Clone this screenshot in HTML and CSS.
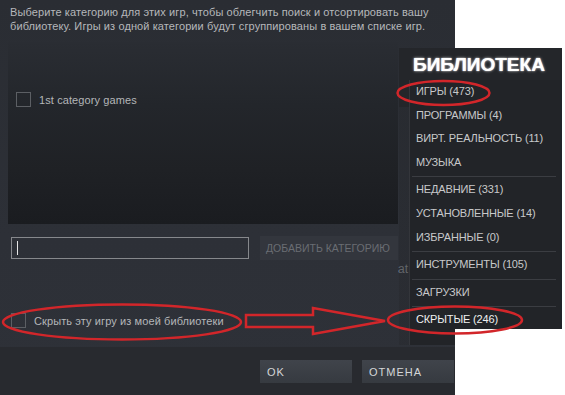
FILE: index.html
```html
<!DOCTYPE html>
<html lang="ru">
<head>
<meta charset="utf-8">
<title>Категории</title>
<link rel="stylesheet" href="styles.css">
</head>
<body>
<div class="page">
  <div class="dialog">
    <div class="main">
      <p class="intro">Выберите категорию для этих игр, чтобы облегчить поиск и отсортировать вашу<br>библиотеку. Игры из одной категории будут сгруппированы в вашем списке игр.</p>
      <div class="list">
        <label class="check-row">
          <span class="box"></span>
          <span class="check-label">1st category games</span>
        </label>
      </div>
      <div class="add-row">
        <div class="input"><span class="caret"></span></div>
        <div class="btn-add">ДОБАВИТЬ КАТЕГОРИЮ</div>
      </div>
      <div class="note">at</div>
      <label class="check-row hide-row">
        <span class="box"></span>
        <span class="check-label">Скрыть эту игру из моей библиотеки</span>
      </label>
    </div>
    <div class="footer">
      <div class="btn">OK</div>
      <div class="btn">ОТМЕНА</div>
    </div>
  </div>

  <div class="library">
    <div class="lib-title">БИБЛИОТЕКА</div>
    <ul class="lib-list">
      <li>ИГРЫ (473)</li>
      <li>ПРОГРАММЫ (4)</li>
      <li>ВИРТ. РЕАЛЬНОСТЬ (11)</li>
      <li>МУЗЫКА</li>
      <li class="sep"></li>
      <li>НЕДАВНИЕ (331)</li>
      <li>УСТАНОВЛЕННЫЕ (14)</li>
      <li>ИЗБРАННЫЕ (0)</li>
      <li class="sep"></li>
      <li>ИНСТРУМЕНТЫ (105)</li>
      <li class="sep"></li>
      <li>ЗАГРУЗКИ</li>
      <li class="sep"></li>
      <li class="active">СКРЫТЫЕ (246)</li>
    </ul>
  </div>

  <div class="blank"></div>

  <svg class="marks" width="565" height="395" viewBox="0 0 565 395" aria-hidden="true">
    <ellipse cx="122" cy="322" rx="119" ry="17.5"/>
    <ellipse cx="443.5" cy="93" rx="46" ry="12"/>
    <ellipse cx="455" cy="320" rx="67" ry="13.5"/>
    <polygon points="246,315 313,315 313,308 385,321 313,334 313,327 246,327"/>
  </svg>
</div>
</body>
</html>
```

FILE: styles.css
```css
* { box-sizing: border-box; }
html, body {
  margin: 0;
  padding: 0;
  background: #ffffff;
}
body {
  font-family: "Liberation Sans", Arial, sans-serif;
  width: 565px;
  height: 395px;
  overflow: hidden;
}
.page {
  position: relative;
  width: 565px;
  height: 395px;
}
.dialog {
  width: 455px;
  height: 395px;
  display: flex;
  flex-direction: column;
  background: linear-gradient(180deg, #2a2d33 0%, #2d3037 60%, #2e3138 100%);
}
.main {
  flex: 1;
  display: flex;
  flex-direction: column;
}
.intro {
  margin: 0;
  padding: 5px 10px 0 10px;
  font-size: 11px;
  letter-spacing: 0.1px;
  line-height: 14px;
  color: #b6b8bb;
  white-space: nowrap;
}
.list {
  margin: 9px 57px 0 8px;
  height: 182px;
  padding: 50px 0 0 8px;
  background: linear-gradient(180deg, #2a2d33 0%, #23262b 35%, #1f2125 70%, #1a1c20 100%);
}
.check-row {
  display: flex;
  align-items: center;
  gap: 8px;
}
.box {
  width: 15px;
  height: 15px;
  border: 1px solid #5c5f64;
  flex: none;
}
.check-label {
  font-size: 11px;
  letter-spacing: 0.1px;
  color: #b4b6b9;
}
.add-row {
  display: flex;
  align-items: center;
  gap: 11px;
  margin: 12px 0 0 11px;
}
.input {
  width: 238px;
  height: 22px;
  border: 1px solid #86888c;
  display: flex;
  align-items: center;
  padding-left: 5px;
}
.caret {
  width: 1px;
  height: 14px;
  background: #e6e6e6;
}
.btn-add {
  width: 138px;
  height: 24px;
  background: #33363d;
  color: #6a6d73;
  font-size: 10.5px;
  display: flex;
  align-items: center;
  padding-left: 6px;
  white-space: nowrap;
  overflow: hidden;
}
.note {
  margin: 2px 0 0 398px;
  font-size: 12px;
  line-height: 14px;
  color: #83868b;
}
.hide-row {
  margin: 37px 0 0 11px;
}
.footer {
  height: 48px;
  flex: none;
  background: #282a2f;
  display: flex;
  gap: 10px;
  padding: 13px 0 0 260px;
}
.btn {
  width: 92px;
  height: 23px;
  background: linear-gradient(180deg, #40444b 0%, #363a40 100%);
  color: #d4d6d8;
  font-size: 11px;
  letter-spacing: 1px;
  display: flex;
  align-items: center;
  padding-left: 7px;
}
.library {
  position: absolute;
  left: 399px;
  top: 48px;
  width: 163px;
  height: 297px;
  background: linear-gradient(180deg, #24262a 0, #24262a 59px, rgba(36, 38, 42, 0.35) 59px, rgba(36, 38, 42, 0.35) 100%);
}
.lib-title {
  padding: 6px 0 0 14px;
  height: 32px;
  font-size: 19px;
  line-height: 22px;
  font-weight: bold;
  color: #ffffff;
  background: #24262a;
  text-shadow: 0 0 3px rgba(255, 255, 255, 0.7), 0 0 1px rgba(255, 255, 255, 0.9);
}
.lib-list {
  list-style: none;
  margin: 0 0 0 10px;
  padding: 0;
  border-left: 1px solid #34363b;
  background: #222428;
  height: 265px;
}
.lib-list li {
  height: 23.6px;
  line-height: 23.6px;
  padding-left: 6px;
  font-size: 11px;
  letter-spacing: -0.15px;
  color: #c8c9cb;
  white-space: nowrap;
}
.lib-list li.sep {
  height: 1px;
  margin: 2px 6px 1px 2px;
  background: #3b3d42;
}
.lib-list li.active {
  color: #f0f0f0;
}
.blank {
  position: absolute;
  left: 455px;
  top: 329px;
  width: 110px;
  height: 66px;
  background: #ffffff;
}
.marks {
  position: absolute;
  left: 0;
  top: 0;
  pointer-events: none;
}
.marks ellipse,
.marks polygon {
  fill: none;
  stroke: #d2262a;
  stroke-width: 2.5;
}
```
